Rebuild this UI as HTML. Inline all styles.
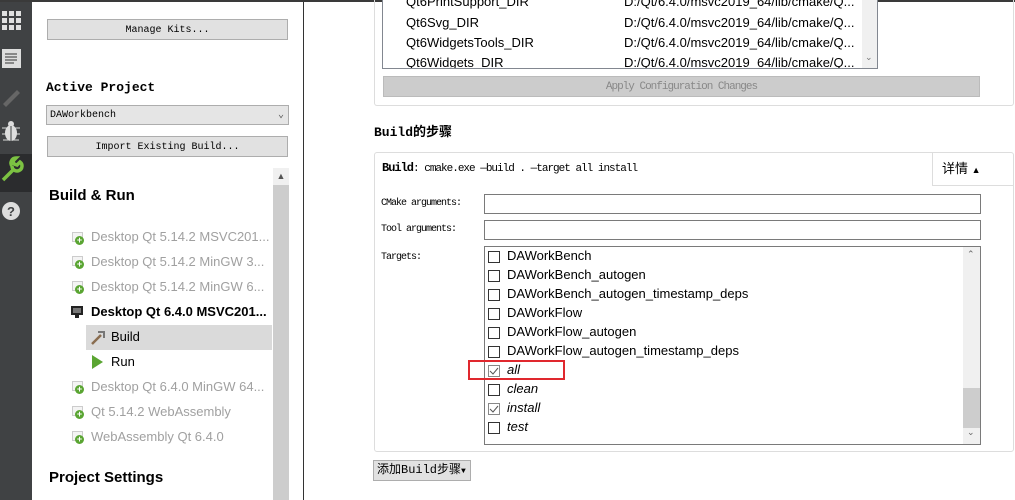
<!DOCTYPE html>
<html><head><meta charset="utf-8"><style>
*{margin:0;padding:0;box-sizing:border-box}
body{width:1015px;height:500px;overflow:hidden;background:#fff;position:relative;font-family:"Liberation Sans","Noto Sans CJK SC",sans-serif;font-size:12px;color:#000}
.a{position:absolute}
.mono{font-family:"Liberation Mono","Noto Sans CJK SC",monospace;font-size:10px}
.cond{letter-spacing:-1px}
.btn{position:absolute;background:#e1e1e1;border:1px solid #adadad;text-align:center;line-height:21px}
.kit{position:absolute;left:91px;color:#a0a0a0;font-size:13px}
.ki{position:absolute;left:72px;width:12px;height:12px}
.ki:before{content:"";position:absolute;left:0;top:0;width:9px;height:8px;border:1px solid #ccc;background:#f4f4f4}
.ki:after{content:"+";position:absolute;left:3px;top:4px;width:9px;height:9px;border-radius:50%;background:#5aa532;color:#fff;font-size:9px;line-height:9px;text-align:center;font-weight:bold}
.inp{position:absolute;border:1px solid #7a7a7a;background:#fff}
.cb{position:absolute;left:488px;width:12px;height:12px;border:1px solid #333;background:#fff}
.ti{position:absolute;left:507px;font-size:13px}
</style></head><body>
<div class="a" style="left:0;top:2px;width:32px;height:498px;background:#404244"></div>
<div class="a" style="left:0;top:154px;width:32px;height:38px;background:#2b2c2e"></div>
<div class="a" style="left:0;top:0;width:1015px;height:2px;background:#3a3a3a"></div>
<svg class="a" style="left:0;top:0" width="32" height="240">
<g fill="#e0e0e0"><rect x="2" y="11" width="5" height="5"/><rect x="9" y="11" width="5" height="5"/><rect x="16" y="11" width="5" height="5"/><rect x="2" y="18" width="5" height="5"/><rect x="9" y="18" width="5" height="5"/><rect x="16" y="18" width="5" height="5"/><rect x="2" y="25" width="5" height="5"/><rect x="9" y="25" width="5" height="5"/><rect x="16" y="25" width="5" height="5"/></g>
<rect x="2" y="49" width="19" height="19" fill="#ddd"/><g stroke="#333"><line x1="5" y1="54" x2="17" y2="54"/><line x1="5" y1="57" x2="17" y2="57"/><line x1="5" y1="60" x2="17" y2="60"/><line x1="5" y1="63" x2="14" y2="63"/></g>
<path d="M3 104 L17 90 L20 93 L6 107 Z" fill="#666"/>
<ellipse cx="11" cy="133" rx="6" ry="8" fill="#ddd"/><circle cx="11" cy="124" r="3" fill="#ddd"/><g stroke="#ddd"><line x1="2" y1="128" x2="20" y2="128"/><line x1="2" y1="134" x2="20" y2="134"/><line x1="3" y1="140" x2="19" y2="140"/></g><line x1="11" y1="126" x2="11" y2="141" stroke="#404244"/>
<path d="M3 180 L13 170 M12 166 a5 5 0 1 0 8 -4 l-3 3 -3 -1 -1 -3 3 -3 a5 5 0 0 0 -4 8" stroke="#7cc242" stroke-width="3.5" fill="none"/>
<circle cx="11" cy="211" r="9" fill="#ddd"/><text x="11" y="216" font-size="13" font-weight="bold" fill="#404244" text-anchor="middle" font-family="Liberation Sans">?</text>
</svg>
<div class="btn mono" style="left:47px;top:19px;width:241px;height:21px">Manage Kits...</div>
<div class="a mono" style="left:46px;top:80px;font-size:13px;font-weight:bold">Active Project</div>
<div class="a mono" style="left:46px;top:105px;width:243px;height:20px;border:1px solid #adadad;background:#e5e5e5;line-height:19px;padding-left:3px">DAWorkbench<span style="position:absolute;right:4px;top:0;color:#555">&#8964;</span></div>
<div class="btn mono" style="left:47px;top:136px;width:241px;height:21px">Import Existing Build...</div>
<div class="a" style="left:273px;top:168px;width:16px;height:332px;background:#cdcdcd"></div>
<div class="a" style="left:273px;top:168px;width:16px;height:17px;background:#f0f0f0;text-align:center;font-size:9px;line-height:17px;color:#555">&#9650;</div>
<div class="a" style="left:49px;top:187px;font-size:15px;font-weight:bold">Build &amp; Run</div>
<div class="ki" style="top:232px"></div><div class="kit" style="top:229px">Desktop Qt 5.14.2 MSVC201...</div>
<div class="ki" style="top:256px"></div><div class="kit" style="top:254px">Desktop Qt 5.14.2 MinGW 3...</div>
<div class="ki" style="top:281px"></div><div class="kit" style="top:279px">Desktop Qt 5.14.2 MinGW 6...</div>
<div class="a" style="left:71px;top:306px;width:12px;height:9px;border:2px solid #222;background:#777"></div><div class="a" style="left:75px;top:315px;width:4px;height:3px;background:#222"></div>
<div class="kit" style="top:304px;color:#000;font-weight:bold">Desktop Qt 6.4.0 MSVC201...</div>
<div class="a" style="left:86px;top:325px;width:186px;height:25px;background:#dadada"></div>
<svg class="a" style="left:90px;top:330px" width="16" height="16"><path d="M2 14 L11 5" stroke="#8a6d4f" stroke-width="2.5"/><path d="M8 2 L14 2 L14 8" stroke="#777" stroke-width="2" fill="none"/></svg>
<div class="a" style="left:111px;top:329px;font-size:13px">Build</div>
<svg class="a" style="left:92px;top:355px" width="12" height="14"><path d="M0 0 L11 7 L0 14Z" fill="#5aa532"/></svg>
<div class="a" style="left:111px;top:354px;font-size:13px">Run</div>
<div class="ki" style="top:381px"></div><div class="kit" style="top:379px">Desktop Qt 6.4.0 MinGW 64...</div>
<div class="ki" style="top:406px"></div><div class="kit" style="top:404px">Qt 5.14.2 WebAssembly</div>
<div class="ki" style="top:431px"></div><div class="kit" style="top:429px">WebAssembly Qt 6.4.0</div>
<div class="a" style="left:49px;top:469px;font-size:15px;font-weight:bold">Project Settings</div>
<div class="a" style="left:303px;top:2px;width:1px;height:498px;background:#333"></div>
<div class="a" style="left:374px;top:0;width:640px;height:106px;border:1px solid #ddd;border-top:none;border-radius:0 0 3px 3px"></div>
<div class="a" style="left:382px;top:0;width:496px;height:69px;border:1px solid #828790;border-top:none;background:#fff;overflow:hidden;font-size:13px">
<div class="a" style="left:23px;top:-6px">Qt6PrintSupport_DIR</div><div class="a" style="left:241px;top:-6px">D:/Qt/6.4.0/msvc2019_64/lib/cmake/Q...</div>
<div class="a" style="left:23px;top:15px">Qt6Svg_DIR</div><div class="a" style="left:241px;top:15px">D:/Qt/6.4.0/msvc2019_64/lib/cmake/Q...</div>
<div class="a" style="left:23px;top:35px">Qt6WidgetsTools_DIR</div><div class="a" style="left:241px;top:35px">D:/Qt/6.4.0/msvc2019_64/lib/cmake/Q...</div>
<div class="a" style="left:23px;top:55px">Qt6Widgets_DIR</div><div class="a" style="left:241px;top:55px">D:/Qt/6.4.0/msvc2019_64/lib/cmake/Q...</div>
<div class="a" style="left:479px;top:0;width:16px;height:68px;background:#f0f0f0"></div>
<div class="a" style="left:482px;top:52px;font-size:9px;color:#777">&#8964;</div>
</div>
<div class="btn mono cond" style="left:383px;top:76px;width:597px;height:21px;background:#cccccc;border-color:#bbb;color:#888;font-size:11px">Apply Configuration Changes</div>
<div class="a mono" style="left:374px;top:121px;font-size:13px;font-weight:bold">Build的步骤</div>
<div class="a" style="left:374px;top:152px;width:640px;height:300px;border:1px solid #ddd;border-radius:3px"></div>
<div class="a mono cond" style="left:382px;top:161px;font-size:11px"><b style="font-size:12px">Build</b>: cmake.exe —build . —target all install</div>
<div class="a" style="left:932px;top:152px;width:82px;height:34px;border-left:1px solid #ddd;border-bottom:1px solid #ddd;line-height:34px;padding-left:9px;font-size:13px">详情 <span style="font-size:9px">&#9650;</span></div>
<div class="a mono cond" style="left:381px;top:198px;font-size:10px">CMake arguments:</div>
<div class="inp" style="left:484px;top:194px;width:497px;height:20px"></div>
<div class="a mono cond" style="left:381px;top:224px;font-size:10px">Tool arguments:</div>
<div class="inp" style="left:484px;top:220px;width:497px;height:20px"></div>
<div class="a mono cond" style="left:381px;top:252px;font-size:10px">Targets:</div>
<div class="inp" style="left:484px;top:246px;width:497px;height:199px"></div>
<div class="a" style="left:963px;top:247px;width:17px;height:197px;background:#f0f0f0"></div>
<div class="a" style="left:963px;top:388px;width:17px;height:40px;background:#cdcdcd"></div>
<div class="a" style="left:967px;top:249px;font-size:9px;color:#666">&#8963;</div>
<div class="a" style="left:967px;top:427px;font-size:9px;color:#666">&#8964;</div>
<div class="cb" style="top:251px"></div><div class="ti" style="top:248px">DAWorkBench</div>
<div class="cb" style="top:270px"></div><div class="ti" style="top:267px">DAWorkBench_autogen</div>
<div class="cb" style="top:289px"></div><div class="ti" style="top:286px">DAWorkBench_autogen_timestamp_deps</div>
<div class="cb" style="top:308px"></div><div class="ti" style="top:305px">DAWorkFlow</div>
<div class="cb" style="top:327px"></div><div class="ti" style="top:324px">DAWorkFlow_autogen</div>
<div class="cb" style="top:346px"></div><div class="ti" style="top:343px">DAWorkFlow_autogen_timestamp_deps</div>
<div class="cb" style="top:365px;border-color:#888"><svg width="10" height="10" style="position:absolute;left:0;top:0"><path d="M1 5 L4 8 L9 2" stroke="#555" fill="none"/></svg></div><div class="ti" style="top:362px;font-style:italic">all</div>
<div class="cb" style="top:384px"></div><div class="ti" style="top:381px;font-style:italic">clean</div>
<div class="cb" style="top:403px;border-color:#888"><svg width="10" height="10" style="position:absolute;left:0;top:0"><path d="M1 5 L4 8 L9 2" stroke="#555" fill="none"/></svg></div><div class="ti" style="top:400px;font-style:italic">install</div>
<div class="cb" style="top:422px"></div><div class="ti" style="top:419px;font-style:italic">test</div>
<div class="a" style="left:468px;top:360px;width:97px;height:20px;border:2px solid #e0282e"></div>
<div class="a mono" style="left:373px;top:460px;width:98px;height:21px;background:#e1e1e1;border:1px solid #adadad;line-height:19px;padding-left:3px;font-size:12px">添加Build步骤<span style="font-size:8px">&#9660;</span></div>
</body></html>
